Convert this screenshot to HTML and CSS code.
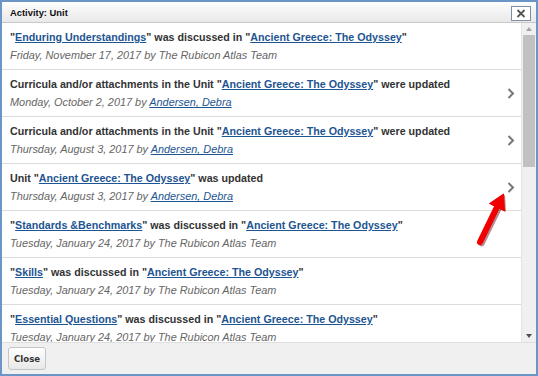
FILE: index.html
```html
<!DOCTYPE html>
<html>
<head>
<meta charset="utf-8">
<link rel="stylesheet" href="styles.css">
</head>
<body>
<div class="dialog">
  <div class="header">
    <span class="title">Activity: Unit</span>
    <button class="x-btn" aria-label="close">
      <svg width="10" height="9" viewBox="0 0 10 9"><path d="M1.5 1 L8.5 8 M8.5 1 L1.5 8" stroke="#555" stroke-width="1.8"/></svg>
    </button>
  </div>
  <div class="body">
    <div class="list">
      <div class="row">
        <div class="text">
          <div class="line">"<a href="#">Enduring Understandings</a>" was discussed in "<a href="#">Ancient Greece: The Odyssey</a>"</div>
          <div class="meta">Friday, November 17, 2017 by The Rubicon Atlas Team</div>
        </div>
      </div>
      <div class="row">
        <div class="text">
          <div class="line">Curricula and/or attachments in the Unit "<a href="#">Ancient Greece: The Odyssey</a>" were updated</div>
          <div class="meta">Monday, October 2, 2017 by <a href="#">Andersen, Debra</a></div>
        </div>
        <svg class="chev" width="8" height="11" viewBox="0 0 8 11"><path d="M1.5 1 L6 5.5 L1.5 10" fill="none" stroke="#777" stroke-width="2"/></svg>
      </div>
      <div class="row">
        <div class="text">
          <div class="line">Curricula and/or attachments in the Unit "<a href="#">Ancient Greece: The Odyssey</a>" were updated</div>
          <div class="meta">Thursday, August 3, 2017 by <a href="#">Andersen, Debra</a></div>
        </div>
        <svg class="chev" width="8" height="11" viewBox="0 0 8 11"><path d="M1.5 1 L6 5.5 L1.5 10" fill="none" stroke="#777" stroke-width="2"/></svg>
      </div>
      <div class="row">
        <div class="text">
          <div class="line">Unit "<a href="#">Ancient Greece: The Odyssey</a>" was updated</div>
          <div class="meta">Thursday, August 3, 2017 by <a href="#">Andersen, Debra</a></div>
        </div>
        <svg class="chev" width="8" height="11" viewBox="0 0 8 11"><path d="M1.5 1 L6 5.5 L1.5 10" fill="none" stroke="#777" stroke-width="2"/></svg>
      </div>
      <div class="row">
        <div class="text">
          <div class="line">"<a href="#">Standards &amp;Benchmarks</a>" was discussed in "<a href="#">Ancient Greece: The Odyssey</a>"</div>
          <div class="meta">Tuesday, January 24, 2017 by The Rubicon Atlas Team</div>
        </div>
      </div>
      <div class="row">
        <div class="text">
          <div class="line">"<a href="#">Skills</a>" was discussed in "<a href="#">Ancient Greece: The Odyssey</a>"</div>
          <div class="meta">Tuesday, January 24, 2017 by The Rubicon Atlas Team</div>
        </div>
      </div>
      <div class="row">
        <div class="text">
          <div class="line">"<a href="#">Essential Questions</a>" was discussed in "<a href="#">Ancient Greece: The Odyssey</a>"</div>
          <div class="meta">Tuesday, January 24, 2017 by The Rubicon Atlas Team</div>
        </div>
      </div>
    </div>
    <div class="scrollbar">
      <div class="arrow up"></div>
      <div class="thumb"></div>
      <div class="spacer"></div>
      <div class="arrow down"></div>
    </div>
  </div>
  <div class="footer">
    <button class="close-btn">Close</button>
  </div>
</div>
<svg class="callout" width="45" height="60" viewBox="0 0 45 60">
  <path d="M10 52 L27 17" stroke="#5a0000" stroke-width="6.5" stroke-linecap="round" opacity="0.45" transform="translate(1.5,1)"/>
  <path d="M33.5 4 L34.5 21 L19.5 13.5 Z" fill="#5a0000" opacity="0.45" transform="translate(1.5,1)"/>
  <path d="M10 52 L27 17" stroke="#f00000" stroke-width="6" stroke-linecap="round"/>
  <path d="M33.5 4 L34.5 21 L19.5 13.5 Z" fill="#f00000" stroke="#f00000" stroke-width="1" stroke-linejoin="round"/>
</svg>
</body>
</html>
```

FILE: styles.css
```css
html, body {
  margin: 0;
  padding: 0;
  background: #fff;
}
body {
  font-family: "Liberation Sans", Arial, sans-serif;
  position: relative;
  width: 538px;
  height: 376px;
  overflow: hidden;
}
.dialog {
  width: 538px;
  height: 376px;
  box-sizing: border-box;
  border: 2px solid #6b95c6;
  display: flex;
  flex-direction: column;
  background: #fff;
}
.header {
  height: 20px;
  flex: none;
  display: flex;
  align-items: center;
  justify-content: space-between;
  padding: 0 5px 0 8px;
  background: linear-gradient(#fdfdfd, #e9e9e9);
  border-bottom: 1px solid #c8c8c8;
}
.title {
  font-weight: bold;
  font-size: 9.4px;
  color: #111;
  padding-top: 1px;
}
.x-btn {
  width: 20px;
  height: 15px;
  margin-top: 3px;
  padding: 0;
  border: 1px solid #7d8fa5;
  background: #fff;
  display: flex;
  align-items: center;
  justify-content: center;
}
.body {
  flex: 1;
  display: flex;
  min-height: 0;
}
.list {
  flex: 1;
  overflow: hidden;
}
.row {
  height: 46px;
  box-sizing: content-box;
  border-bottom: 1px solid #dcdcdc;
  display: flex;
  align-items: center;
  padding: 0 6px 0 8px;
}
.text {
  flex: 1;
  display: flex;
  flex-direction: column;
  gap: 2px;
}
.line {
  font-weight: bold;
  font-size: 10.7px;
  line-height: 16px;
  color: #333;
}
.meta {
  font-style: italic;
  font-size: 10.9px;
  line-height: 16px;
  color: #666;
}
a {
  color: #1d5592;
  text-decoration: underline;
}
.chev {
  flex: none;
}
.scrollbar {
  width: 14px;
  flex: none;
  background: #f0f0f0;
  display: flex;
  flex-direction: column;
  align-items: center;
  border-left: 1px solid #e4e4e4;
}
.arrow {
  height: 12px;
  width: 14px;
  flex: none;
  display: flex;
  align-items: center;
  justify-content: center;
}
.arrow::before {
  content: "";
  width: 0;
  height: 0;
  border-left: 3.5px solid transparent;
  border-right: 3.5px solid transparent;
}
.up::before {
  border-bottom: 4px solid #a3a3a3;
}
.down::before {
  border-top: 4px solid #505050;
}
.thumb {
  width: 12px;
  height: 132px;
  background: #c1c1c1;
  flex: none;
}
.spacer {
  flex: 1;
}
.footer {
  height: 32px;
  flex: none;
  background: #f0f0f0;
  border-top: 1px solid #dedede;
  display: flex;
  align-items: center;
  padding-left: 6px;
  box-sizing: border-box;
}
.close-btn {
  font-family: "DejaVu Sans", Verdana, sans-serif;
  font-weight: bold;
  font-size: 8.6px;
  color: #333;
  height: 23px;
  padding: 0 5px;
  border: 1px solid #c5c5c5;
  border-radius: 3px;
  background: linear-gradient(#ffffff, #e8e8e8);
}
.callout {
  position: absolute;
  left: 470px;
  top: 190px;
}
```
